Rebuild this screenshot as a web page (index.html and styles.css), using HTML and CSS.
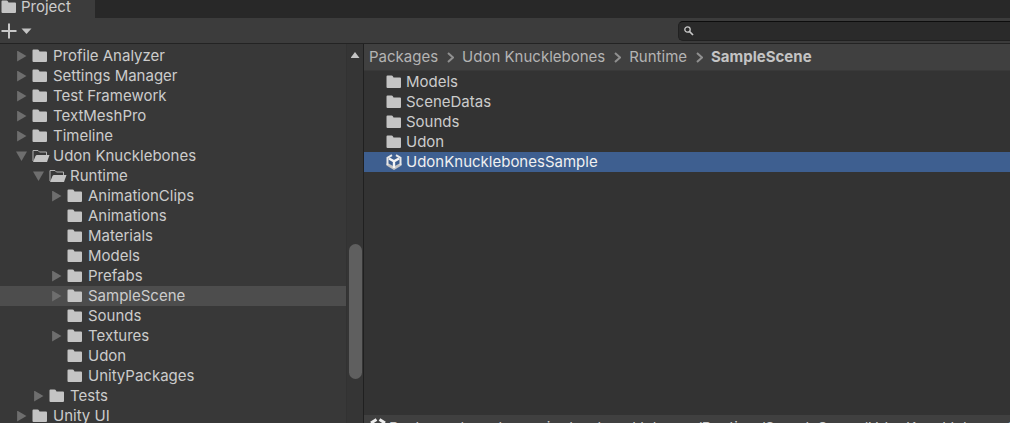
FILE: index.html
```html
<!DOCTYPE html>
<html lang="en">
<head>
<meta charset="utf-8">
<title>Project</title>
<link rel="stylesheet" href="styles.css">
</head>
<body>
<svg class="defs" aria-hidden="true">
  <symbol id="folder" viewBox="0 0 16 14"><path d="M0.500 1.500Q.5.500 1.500.500H5.500Q6.500.500 7 1.500L7.500 2.500H14Q15 2.500 15 3.500V12Q15 13 14 13H1.500Q.5 13 .5 12Z" fill="#c4c4c4"/></symbol>
  <symbol id="open" viewBox="0 0 18 14"><path d="M1 12V1.500H6L7.500 3H14.500V6" fill="none" stroke="#b0b0b0"/><path d="M5 6H17.500L15 13H1L3.500 7Q4 6 5 6Z" fill="#c4c4c4"/></symbol>
  <symbol id="unity" viewBox="0 0 16 16"><path d="M.5 9.500 3 9.800 8 12.500 13 9.800 15.500 9.500V11.500L8 15.900.5 11.500Z" fill="#c4c4c4"/><path d="M6 1.200 1.500 3.800V11M10 1.200 14.500 3.800V11" fill="none" stroke="#e8e8e8" stroke-width="2"/><path d="M3 4.500 8 7.400 13 4.500M8 7.400V14" fill="none" stroke="#f4f4f4" stroke-width="2.400"/></symbol>
</svg>
<div class="panel">
  <header class="tabs"><div class="tab"><svg class="folder"><use href="#folder"/></svg><span>Project</span></div></header>
  <div class="toolbar">
    <button class="add" aria-label="Create"><svg width="32" height="16" viewBox="0 0 32 16"><path d="M8 .5V15.500M.5 8H15.500" stroke="#c8c8c8" stroke-width="2"/><path d="M20.500 5.500H30.500L25.500 11Z" fill="#c4c4c4"/></svg></button>
    <label class="search"><svg width="10" height="10" viewBox="0 0 10 10" fill="none" stroke="#c8c8c8"><circle cx="3.500" cy="3.500" r="2.700" stroke-width="1.300"/><path d="M5.500 5.500 9 9" stroke-width="1.700"/></svg><input type="text" aria-label="Search"></label>
  </div>
  <main class="body">
    <nav class="side">
      <ul class="tree">
        <li class="l0"><i class="arrow"></i><svg class="folder"><use href="#folder"/></svg><span>Profile Analyzer</span></li>
        <li class="l0"><i class="arrow"></i><svg class="folder"><use href="#folder"/></svg><span>Settings Manager</span></li>
        <li class="l0"><i class="arrow"></i><svg class="folder"><use href="#folder"/></svg><span>Test Framework</span></li>
        <li class="l0"><i class="arrow"></i><svg class="folder"><use href="#folder"/></svg><span>TextMeshPro</span></li>
        <li class="l0"><i class="arrow"></i><svg class="folder"><use href="#folder"/></svg><span>Timeline</span></li>
        <li class="l0"><i class="arrow down"></i><svg class="open"><use href="#open"/></svg><span>Udon Knucklebones</span></li>
        <li class="l1"><i class="arrow down"></i><svg class="open"><use href="#open"/></svg><span>Runtime</span></li>
        <li class="l2"><i class="arrow"></i><svg class="folder"><use href="#folder"/></svg><span>AnimationClips</span></li>
        <li class="l2"><i class="arrow none"></i><svg class="folder"><use href="#folder"/></svg><span>Animations</span></li>
        <li class="l2"><i class="arrow none"></i><svg class="folder"><use href="#folder"/></svg><span>Materials</span></li>
        <li class="l2"><i class="arrow none"></i><svg class="folder"><use href="#folder"/></svg><span>Models</span></li>
        <li class="l2"><i class="arrow"></i><svg class="folder"><use href="#folder"/></svg><span>Prefabs</span></li>
        <li class="l2 current"><i class="arrow"></i><svg class="folder"><use href="#folder"/></svg><span>SampleScene</span></li>
        <li class="l2"><i class="arrow none"></i><svg class="folder"><use href="#folder"/></svg><span>Sounds</span></li>
        <li class="l2"><i class="arrow"></i><svg class="folder"><use href="#folder"/></svg><span>Textures</span></li>
        <li class="l2"><i class="arrow none"></i><svg class="folder"><use href="#folder"/></svg><span>Udon</span></li>
        <li class="l2"><i class="arrow none"></i><svg class="folder"><use href="#folder"/></svg><span>UnityPackages</span></li>
        <li class="l1"><i class="arrow"></i><svg class="folder"><use href="#folder"/></svg><span>Tests</span></li>
        <li class="l0"><i class="arrow"></i><svg class="folder"><use href="#folder"/></svg><span>Unity UI</span></li>
      </ul>
      <div class="scroll"><i class="up"></i><i class="thumb"></i></div>
    </nav>
    <section class="content">
      <div class="crumbs">
        <a href="#">Packages</a><svg class="chev"><path d="M1 1 6 5.500 1 10"/></svg><a href="#">Udon Knucklebones</a><svg class="chev"><path d="M1 1 6 5.500 1 10"/></svg><a href="#">Runtime</a><svg class="chev"><path d="M1 1 6 5.500 1 10"/></svg><a href="#" class="here">SampleScene</a>
      </div>
      <ul class="files">
        <li><svg class="folder"><use href="#folder"/></svg><span>Models</span></li>
        <li><svg class="folder"><use href="#folder"/></svg><span>SceneDatas</span></li>
        <li><svg class="folder"><use href="#folder"/></svg><span>Sounds</span></li>
        <li><svg class="folder"><use href="#folder"/></svg><span>Udon</span></li>
        <li class="selected"><svg class="unity"><use href="#unity"/></svg><span>UdonKnucklebonesSample</span></li>
      </ul>
      <footer class="status"><svg class="unity" viewBox="0 0 16 16"><path d="M1 5 6.500 1.500M9.500 1.500 15 5" fill="none" stroke="#eee" stroke-width="3"/></svg><span>Packages/com.hecomi.udon-knucklebones/Runtime/SampleScene/UdonKnucklebonesSample.unity</span></footer>
    </section>
  </main>
</div>
</body>
</html>
```
FILE: styles.css
```css
* { box-sizing: border-box; }
body { margin: 0; background: #383838; color: #cccccc; font: 15px/20px Inter, sans-serif; }
ul { list-style: none; margin: 0; padding: 0; }
svg { flex: none; display: block; }
.defs { position: absolute; width: 0; height: 0; }
.panel { height: 100vh; display: flex; flex-direction: column; overflow: hidden; }
.tabs { height: 18px; flex: none; display: flex; background: #282828; }
.tab { width: 95px; display: flex; align-items: center; gap: 4px; padding: 0 0 4px 1px; line-height: 14px; background: #3c3c3c; }
.folder { width: 16px; height: 14px; }
.open { width: 18px; height: 14px; }
.toolbar { height: 26px; flex: none; display: flex; justify-content: space-between; align-items: center; background: #3c3c3c; border-bottom: 1px solid #232323; }
.add { border: 0; padding: 0; margin-left: 1px; background: none; }
.search { width: 332px; height: 20px; display: flex; align-items: center; padding-left: 5px; background: #2a2a2a; border: 1px solid #212121; border-top-color: #0d0d0d; border-right: 0; border-radius: 5px 0 0 5px; }
.search input { flex: 1; min-width: 0; border: 0; outline: 0; background: none; color: inherit; font: inherit; height: 16px; }
.body { flex: 1; min-height: 0; display: flex; }
.side { width: 364px; flex: none; display: flex; border-right: 1px solid #202020; }
.tree { flex: 1; padding-top: 2px; }
.tree li { height: 20px; display: flex; align-items: center; white-space: nowrap; }
.tree .l0 { padding-left: 16px; }
.tree .l1 { padding-left: 33px; }
.tree .l2 { padding-left: 51px; }
.tree .folder { margin: 0 5px; }
.tree .open { margin: 0 3px 0 5px; }
.arrow { width: 11px; height: 11px; flex: none; background: #6e6e6e; clip-path: polygon(10% 0, 95% 50%, 10% 100%); }
.down { clip-path: polygon(0 10%, 100% 10%, 50% 95%); }
.none { visibility: hidden; }
.current { background: #4d4d4d; }
.scroll { width: 17px; flex: none; display: flex; flex-direction: column; align-items: center; border-left: 1px solid #323232; background: #353535; }
.up { width: 9px; height: 6px; margin-top: 8px; background: #c4c4c4; clip-path: polygon(50% 0, 100% 100%, 0 100%); }
.thumb { width: 13px; height: 135px; margin-top: 186px; border-radius: 7px; background: #5f5f5f; }
.content { flex: 1; min-width: 0; display: flex; flex-direction: column; background: #333; }
.crumbs { height: 27px; flex: none; display: flex; align-items: center; padding-left: 5px; background: #404040; border-bottom: 1px solid #393939; }
.crumbs a { color: #b4b4b4; text-decoration: none; }
.crumbs .here { font-weight: 700; color: #c4c4c4; }
.chev { width: 7px; height: 11px; margin: 0 8px 0 9px; fill: none; stroke: #909090; stroke-width: 2; }
.files { flex: 1; min-height: 0; padding-top: 1px; }
.files li { height: 20px; display: flex; align-items: center; gap: 4px; padding-left: 22px; }
.files .selected { background: #3e5f90; color: #f0f0f0; }
.unity { width: 16px; height: 16px; }
.status { height: 8px; flex: none; display: flex; gap: 3px; padding: 3px 0 0 6px; background: #404040; white-space: nowrap; overflow: hidden; }
```
